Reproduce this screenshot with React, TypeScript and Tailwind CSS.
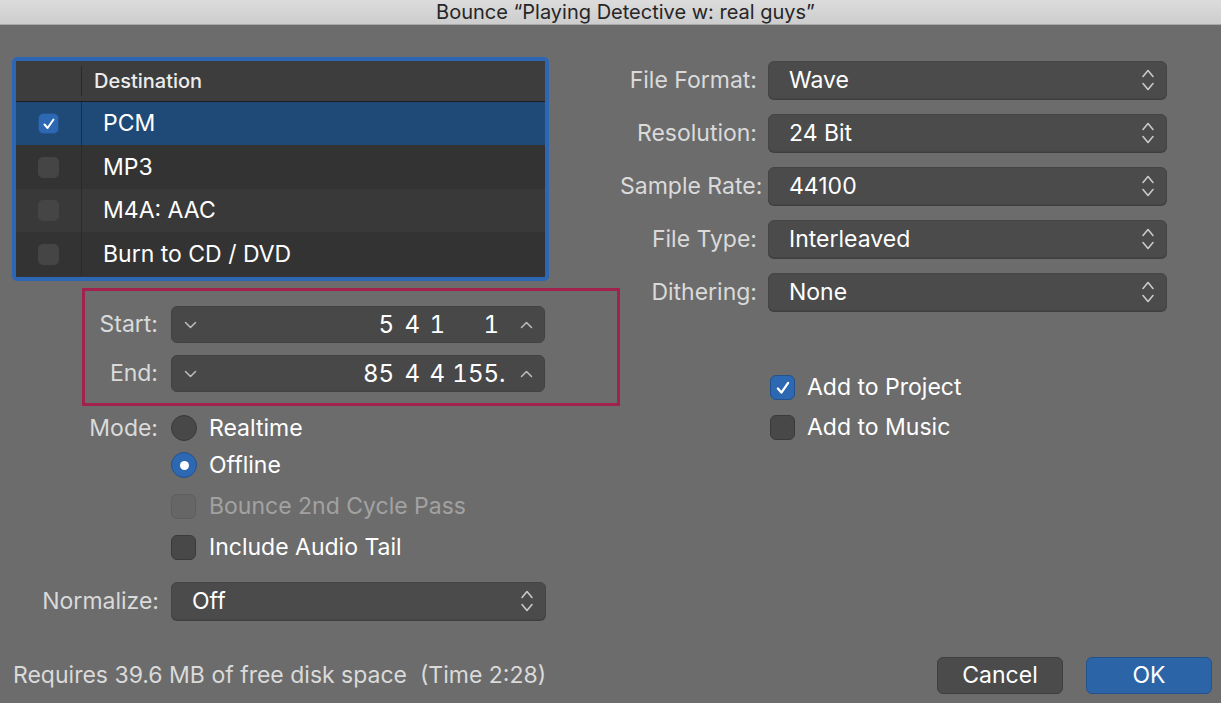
import React from "react";

const font = "font-['Inter','Noto_Sans',sans-serif]";

function Check({ size = 14 }: { size?: number }) {
  return (
    <svg width={size} height={size} viewBox="0 0 14 14" fill="none">
      <path d="M2.5 7.5 L5.6 11 L11.5 2.5" stroke="white" strokeWidth="2" strokeLinecap="round" strokeLinejoin="round" />
    </svg>
  );
}

function UpDown() {
  return (
    <svg width="14" height="26" viewBox="0 0 14 26" fill="none">
      <path d="M2 9.5 L7 3.5 L12 9.5" stroke="#c9c9c9" strokeWidth="1.6" strokeLinecap="round" strokeLinejoin="round" />
      <path d="M2 16.5 L7 22.5 L12 16.5" stroke="#c9c9c9" strokeWidth="1.6" strokeLinecap="round" strokeLinejoin="round" />
    </svg>
  );
}

function Chevron({ up }: { up?: boolean }) {
  return (
    <svg width="13" height="8" viewBox="0 0 13 8" fill="none">
      <path
        d={up ? "M1.5 6.5 L6.5 1.5 L11.5 6.5" : "M1.5 1.5 L6.5 6.5 L11.5 1.5"}
        stroke="#bdbdbd"
        strokeWidth="1.5"
        strokeLinecap="round"
        strokeLinejoin="round"
      />
    </svg>
  );
}

function Box({ checked, disabled }: { checked?: boolean; disabled?: boolean }) {
  if (checked)
    return (
      <div className="w-[25px] h-[25px] rounded-[6px] bg-[#2d68b3] border border-[#24528d] flex items-center justify-center">
        <Check size={16} />
      </div>
    );
  return (
    <div
      className={
        disabled
          ? "w-[25px] h-[25px] rounded-[6px] bg-[#666666] border border-[#5e5e5e]"
          : "w-[25px] h-[25px] rounded-[6px] bg-[#484848] border border-[#3a3a3a]"
      }
    />
  );
}

function Select({ value, w }: { value: string; w: string }) {
  return (
    <div className={`${w} h-[38px] rounded-[6px] bg-[#4b4b4b] border border-[#454545] shadow-[0_1px_0_#3e3e3e] flex items-center justify-between pl-[20px] pr-[11px]`}>
      <span className="text-[23px] text-white">{value}</span>
      <UpDown />
    </div>
  );
}

// position field: bar / beat / division / ticks, each right-aligned in its slot
function Stepper({ parts, dot }: { parts: string[]; dot?: boolean }) {
  const slots = ["w-[40px]", "w-[26px]", "w-[25px]", "w-[54px]"];
  return (
    <div className="w-[374px] h-[37px] rounded-[6px] bg-[#484848] border border-[#424242] flex items-center pl-[12px] pr-[11px]">
      <Chevron />
      <div className="flex-1" />
      <div className="flex items-center text-[24px] text-white tabular-nums leading-none">
        {parts.map((p, i) => (
          <span key={i} className={`${slots[i]} text-right`}>
            {p}
          </span>
        ))}
        <span className="w-[10px]">{dot ? "." : ""}</span>
      </div>
      <div className="ml-[11px]">
        <Chevron up />
      </div>
    </div>
  );
}

const destRows = [
  { name: "PCM", checked: true, h: "h-[43px]", bg: "bg-[#1f4a77]" },
  { name: "MP3", h: "h-[44px]", bg: "bg-[#333333]" },
  { name: "M4A: AAC", h: "h-[43px]", bg: "bg-[#393939]" },
  { name: "Burn to CD / DVD", h: "h-[44px]", bg: "bg-[#333333]" },
];

const rightRows = [
  ["File Format:", "Wave"],
  ["Resolution:", "24 Bit"],
  ["Sample Rate:", "44100"],
  ["File Type:", "Interleaved"],
  ["Dithering:", "None"],
];

export default function App() {
  return (
    <div className={`w-[1221px] h-[703px] overflow-hidden bg-[#6c6c6c] flex flex-col ${font}`}>
      {/* title bar */}
      <div className="h-[25px] shrink-0 bg-gradient-to-b from-[#dcdcdc] to-[#cdcdcd] border-b border-[#a9a9a9] flex items-center justify-center pl-[30px]">
        <span className="text-[20px] text-[#262626] leading-none">Bounce “Playing Detective w: real guys”</span>
      </div>

      <div className="flex">
        {/* left column */}
        <div className="w-[620px] shrink-0 flex flex-col">
          <div className="mt-[32px] ml-[12px] w-[537px] h-[224px] border-[4px] border-[#2e66b6] rounded-[5px] bg-[#333333] overflow-hidden">
            <div className="h-[41px] bg-[#3d3d3d] border-b border-[#1c1c1c] flex items-center">
              <div className="w-[66px] h-[30px] border-r border-[#2a2a2a]" />
              <span className="pl-[12px] text-[20px] font-medium text-[#ececec]">Destination</span>
            </div>
            {destRows.map((r) => (
              <div key={r.name} className={`${r.h} ${r.bg} flex items-center`}>
                <div className="w-[66px] h-full border-r border-[#2a2a2a] flex items-center justify-center">
                  {r.checked ? (
                    <div className="w-[21px] h-[21px] rounded-[5px] bg-[#2d68b3] border border-[#24528d] flex items-center justify-center">
                      <Check size={14} />
                    </div>
                  ) : (
                    <div className="w-[21px] h-[21px] rounded-[5px] bg-[#454545]" />
                  )}
                </div>
                <span className="pl-[21px] text-[23px] text-white">{r.name}</span>
              </div>
            ))}
          </div>

          <div className="mt-[7px] ml-[82px] w-[538px] h-[118px] border-[3px] border-[#a3214f] flex flex-col pt-[15px] gap-[12px]">
            <div className="flex items-center">
              <span className="w-[73px] text-right text-[23px] text-[#dadada]">Start:</span>
              <div className="ml-[13px]">
                <Stepper parts={["5", "4", "1", "1"]} />
              </div>
            </div>
            <div className="flex items-center">
              <span className="w-[73px] text-right text-[23px] text-[#dadada]">End:</span>
              <div className="ml-[13px]">
                <Stepper parts={["85", "4", "4", "155"]} dot />
              </div>
            </div>
          </div>

          <div className="flex flex-col">
            <div className="mt-[9px] h-[26px] flex items-center">
              <span className="w-[158px] text-right text-[23px] text-[#dadada]">Mode:</span>
              <div className="ml-[13px] w-[26px] h-[26px] rounded-full bg-[#484848] border border-[#3a3a3a]" />
              <span className="ml-[12px] text-[23px] text-white">Realtime</span>
            </div>
            <div className="mt-[11px] h-[26px] flex items-center pl-[171px]">
              <div className="w-[26px] h-[26px] rounded-full bg-[#2d68b3] border border-[#24528d] flex items-center justify-center">
                <div className="w-[9px] h-[9px] rounded-full bg-white" />
              </div>
              <span className="ml-[12px] text-[23px] text-white">Offline</span>
            </div>
            <div className="mt-[15px] h-[26px] flex items-center pl-[171px]">
              <Box disabled />
              <span className="ml-[13px] text-[23px] text-[#a2a2a2]">Bounce 2nd Cycle Pass</span>
            </div>
            <div className="mt-[15px] h-[26px] flex items-center pl-[171px]">
              <Box />
              <span className="ml-[13px] text-[23px] text-white">Include Audio Tail</span>
            </div>
            <div className="mt-[22px] flex items-center">
              <span className="w-[159px] text-right text-[23px] text-[#dadada]">Normalize:</span>
              <div className="ml-[12px]">
                <Select value="Off" w="w-[375px]" />
              </div>
            </div>
          </div>
        </div>

        {/* right column */}
        <div className="flex-1 flex flex-col">
          <div className="mt-[36px] flex flex-col gap-[15px]">
            {rightRows.map(([l, v]) => (
              <div key={l} className="flex items-center">
                <span className="w-[137px] text-right text-[23px] text-[#dadada] whitespace-nowrap">{l}</span>
                <div className="ml-[11px]">
                  <Select value={v} w="w-[399px]" />
                </div>
              </div>
            ))}
          </div>
          <div className="mt-[64px] pl-[150px] flex flex-col gap-[15px]">
            <div className="h-[25px] flex items-center">
              <Box checked />
              <span className="ml-[12px] text-[23px] text-white">Add to Project</span>
            </div>
            <div className="h-[25px] flex items-center">
              <Box />
              <span className="ml-[12px] text-[23px] text-white">Add to Music</span>
            </div>
          </div>
        </div>
      </div>

      {/* footer */}
      <div className="mt-[37px] h-[37px] flex items-center justify-between pl-[13px] pr-[9px]">
        <span className="text-[23px] text-[#dadada] whitespace-pre">Requires 39.6 MB of free disk space  (Time 2:28)</span>
        <div className="flex gap-[23px]">
          <div className="w-[126px] h-[37px] rounded-[6px] bg-[#4b4b4b] border border-[#3f3f3f] flex items-center justify-center text-[23px] text-white">
            Cancel
          </div>
          <div className="w-[126px] h-[37px] rounded-[6px] bg-[#2b65a8] border border-[#24528d] flex items-center justify-center text-[23px] text-white">
            OK
          </div>
        </div>
      </div>
    </div>
  );
}
